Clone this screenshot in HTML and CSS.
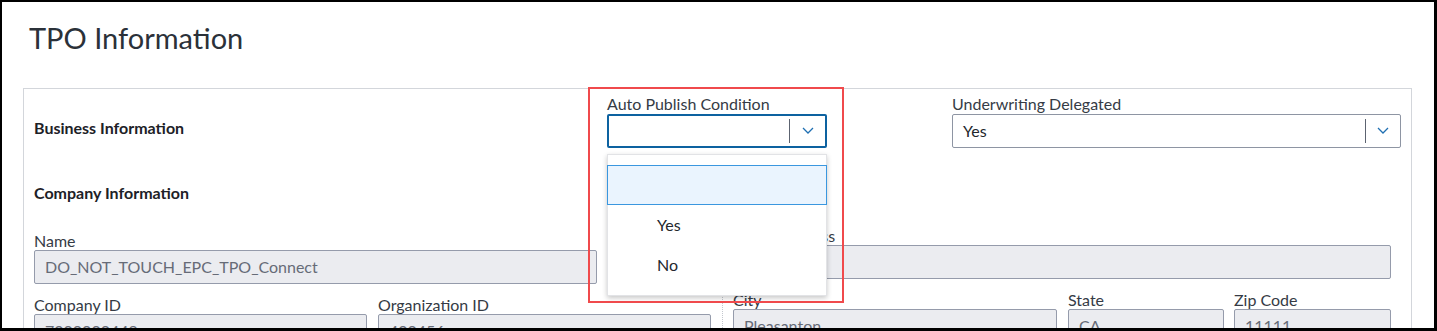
FILE: index.html
```html
<!DOCTYPE html>
<html lang="en">
<head>
    <meta charset="UTF-8">
    <meta name="viewport" content="width=device-width, initial-scale=1.0">
    <title>TPO Information</title>
    <link rel="stylesheet" href="styles.css">
</head>
<body>
    <div class="frame">
        <h1 class="page-title">TPO Information</h1>

        <div class="card">
            <div class="top-row">
                <div class="section-head business">Business Information</div>

                <div class="field auto-publish">
                    <label class="field-label">Auto Publish Condition</label>
                    <div class="select focused">
                        <span class="select-value"></span>
                        <span class="select-sep"></span>
                        <span class="select-arrow">
                            <svg width="12" height="7" viewBox="0 0 12 7"><polyline points="1,1 6,6 11,1" fill="none" stroke="#1f6fb2" stroke-width="1.3"/></svg>
                        </span>
                    </div>

                    <ul class="dropdown">
                        <li class="option active"></li>
                        <li class="option">Yes</li>
                        <li class="option">No</li>
                    </ul>

                    <div class="highlight-box"></div>
                </div>

                <div class="field underwriting">
                    <label class="field-label">Underwriting Delegated</label>
                    <div class="select">
                        <span class="select-value">Yes</span>
                        <span class="select-sep"></span>
                        <span class="select-arrow">
                            <svg width="12" height="7" viewBox="0 0 12 7"><polyline points="1,1 6,6 11,1" fill="none" stroke="#1f6fb2" stroke-width="1.3"/></svg>
                        </span>
                    </div>
                </div>
            </div>

            <div class="section-head company">Company Information</div>

            <div class="columns">
                <div class="col-left">
                    <div class="field name-field">
                        <label class="field-label">Name</label>
                        <div class="input">DO_NOT_TOUCH_EPC_TPO_Connect</div>
                    </div>
                    <div class="field-row">
                        <div class="field w-333">
                            <label class="field-label">Company ID</label>
                            <div class="input">7000000449</div>
                        </div>
                        <div class="field w-333">
                            <label class="field-label">Organization ID</label>
                            <div class="input">400456</div>
                        </div>
                    </div>
                </div>

                <div class="col-right">
                    <div class="field">
                        <label class="field-label">Street Address</label>
                        <div class="input"></div>
                    </div>
                    <div class="field-row">
                        <div class="field city">
                            <label class="field-label">City</label>
                            <div class="input">Pleasanton</div>
                        </div>
                        <div class="field state">
                            <label class="field-label">State</label>
                            <div class="input">CA</div>
                        </div>
                        <div class="field zip">
                            <label class="field-label">Zip Code</label>
                            <div class="input">11111</div>
                        </div>
                    </div>
                </div>
            </div>
        </div>
    </div>
</body>
</html>
```

FILE: styles.css
```css
* {
    box-sizing: border-box;
}

body {
    margin: 0;
    font-family: Lato, "Open Sans", Arial, sans-serif;
    color: #353b45;
    background: #fff;
}

.frame {
    width: 1437px;
    height: 331px;
    border-style: solid;
    border-color: #000;
    border-width: 2px 3px 3px 2px;
    overflow: hidden;
    padding-top: 19px;
}

.page-title {
    margin: 0 0 32px 27px;
    font-size: 29px;
    line-height: 1.2;
    font-weight: 400;
    color: #2b3139;
}

.card {
    margin: 0 22px 0 21px;
    border: 1px solid #d3d6db;
    border-bottom: none;
    padding: 6px 0 40px 10px;
    height: 300px;
}

.top-row {
    display: flex;
}

.section-head {
    font-size: 16px;
    line-height: 18px;
    font-weight: 700;
    color: #1d2127;
}

.section-head.business {
    width: 573px;
    margin-top: 24px;
}

.section-head.company {
    margin-top: 36px;
}

.field {
    position: relative;
}

.field-label {
    display: block;
    font-size: 16px;
    line-height: 18px;
    color: #353b45;
}

.auto-publish {
    width: 220px;
}

.underwriting {
    width: 449px;
    margin-left: 125px;
}

.select {
    display: flex;
    align-items: center;
    height: 34px;
    margin-top: 1px;
    border: 1px solid #8e95a3;
    border-radius: 2px;
    background: #fff;
    font-size: 16px;
    color: #22262c;
}

.select.focused {
    border: 2px solid #0d62a0;
}

.select-value {
    flex: 1;
    padding-left: 10px;
}

.select.focused .select-value {
    padding-left: 9px;
}

.select-sep {
    width: 1px;
    height: 24px;
    background: #5c6370;
}

.select-arrow {
    width: 34px;
    display: flex;
    justify-content: center;
    align-items: center;
}

.select.focused .select-arrow {
    width: 35px;
}

.dropdown {
    position: absolute;
    top: 59px;
    left: 0;
    width: 220px;
    margin: 0;
    padding: 10px 0;
    list-style: none;
    background: #fff;
    border: 1px solid #e2e3e6;
    box-shadow: 0 2px 5px rgba(0, 0, 0, 0.22);
    z-index: 5;
}

.option {
    height: 40px;
    line-height: 40px;
    padding-left: 49px;
    font-size: 16px;
    color: #23272d;
}

.option.active {
    background: #eaf4fe;
    border: 1px solid #3a97df;
    margin: 0 -1px;
}

.highlight-box {
    position: absolute;
    left: -19px;
    top: -8px;
    width: 256px;
    height: 216px;
    border: 2px solid #f04a4c;
    z-index: 6;
}

.columns {
    display: flex;
    margin-top: 25px;
}

.col-left {
    width: 677px;
    padding-top: 5px;
}

.col-right {
    width: 669px;
    margin-left: 11px;
    padding-left: 10px;
    border-left: 1px dotted #c3c7ce;
}

.input {
    height: 34px;
    border: 1px solid #959bab;
    border-radius: 2px;
    background: #ebecf0;
    padding: 0 10px;
    font-size: 16px;
    line-height: 32px;
    color: #666b77;
    white-space: nowrap;
}

.name-field {
    width: 563px;
}

.field-row {
    display: flex;
    margin-top: 12px;
}

.w-333 {
    width: 333px;
}

.w-333 + .w-333 {
    margin-left: 11px;
}

.city {
    width: 324px;
}

.state {
    width: 156px;
    margin-left: 11px;
}

.zip {
    width: 157px;
    margin-left: 10px;
}
```
